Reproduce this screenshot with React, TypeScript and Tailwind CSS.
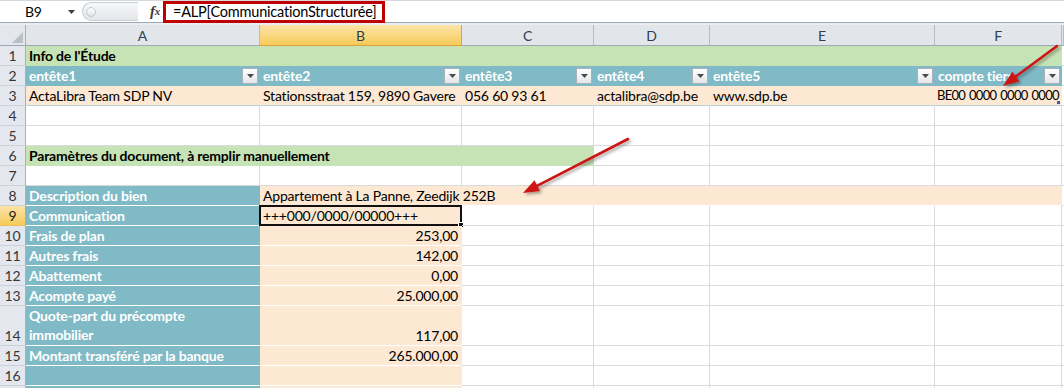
import React from 'react';

const FONT = "font-['Lato','Liberation_Sans',sans-serif]";

type CellProps = {
  w: string;
  line?: string;
  className?: string;
  children?: React.ReactNode;
};

// one spreadsheet cell; gridline on the right and bottom
const Cell = ({ w, line = 'border-[#DADADA]', className = '', children }: CellProps) => (
  <div
    className={`relative flex shrink-0 items-end whitespace-nowrap border-r border-b px-[3px] pb-px leading-[17px] ${w} ${line} ${className}`}
  >
    {children}
  </div>
);

const RowHead = ({ n, active }: { n?: number; active?: boolean }) => (
  <div
    className={`flex w-[26px] shrink-0 items-end justify-center border-r border-b pb-px leading-[17px] ${
      active
        ? 'border-r-[#E2A23A] border-b-[#E9BE62] bg-linear-to-b from-[#FCE4A6] to-[#F7CB58] text-[#1E1E1E]'
        : 'border-r-[#A7B1BD] border-b-[#CDD2D8] bg-[#E4E8EE] text-[#363636]'
    }`}
  >
    {n}
  </div>
);

const FilterBtn = () => (
  <div className="ml-auto mb-0 flex h-[16px] w-[16px] shrink-0 items-center justify-center border border-[#A9B1BA] bg-linear-to-b from-white to-[#E4E6E9]">
    <svg width="7" height="4" viewBox="0 0 7 4">
      <polygon points="0,0 7,0 3.5,4" fill="#4A4A4A" />
    </svg>
  </div>
);

const Arrow = ({ x1, y1, x2, y2 }: { x1: number; y1: number; x2: number; y2: number }) => {
  const dx = x2 - x1;
  const dy = y2 - y1;
  const len = Math.hypot(dx, dy);
  const ux = dx / len;
  const uy = dy / len;
  const hl = 16;
  const hw = 6;
  const bx = x2 - ux * hl;
  const by = y2 - uy * hl;
  const pts = `${x2},${y2} ${bx - uy * hw},${by + ux * hw} ${bx + uy * hw},${by - ux * hw}`;
  return (
    <g filter="url(#shadow)">
      <line x1={x1} y1={y1} x2={bx + ux * 3} y2={by + uy * 3} stroke="#CC1414" strokeWidth={2.6} strokeLinecap="round" />
      <polygon points={pts} fill="#CC1414" />
    </g>
  );
};

const teal = 'bg-[#80BAC6] font-bold text-white';
const peach = 'bg-[#FCE8D3]';
const green = 'bg-[#C6E3B5] font-bold text-black';

const labels: { n?: number; label: React.ReactNode; value: string; tall?: boolean }[] = [
  { n: 10, label: 'Frais de plan', value: '253,00' },
  { n: 11, label: 'Autres frais', value: '142,00' },
  { n: 12, label: 'Abattement', value: '0,00' },
  { n: 13, label: 'Acompte payé', value: '25.000,00' },
  {
    n: 14,
    label: (
      <span className="whitespace-normal leading-[19px]">
        Quote-part du précompte
        <br />
        immobilier
      </span>
    ),
    value: '117,00',
    tall: true,
  },
  { n: 15, label: 'Montant transféré par la banque', value: '265.000,00' },
  { n: 16, label: '', value: '' },
  // row 17 only peeks in at the bottom edge
  { label: '', value: '' },
];

const WhiteRest = () => (
  <>
    <Cell w="w-[132px]" />
    <Cell w="w-[116px]" />
    <Cell w="w-[225px]" />
    <Cell w="w-[127px]" />
    <Cell w="flex-1" />
  </>
);

const EmptyRow = ({ n }: { n: number }) => (
  <div className="flex h-5">
    <RowHead n={n} />
    <Cell w="w-[234px]" />
    <Cell w="w-[202px]" />
    <WhiteRest />
  </div>
);

export default function App() {
  const heads = ['entête1', 'entête2', 'entête3', 'entête4', 'entête5', 'compte tiers'];
  const headW = ['w-[234px]', 'w-[202px]', 'w-[132px]', 'w-[116px]', 'w-[225px]', 'w-[127px]'];
  const row3 = ['ActaLibra Team SDP NV', 'Stationsstraat 159, 9890 Gavere', '056 60 93 61', 'actalibra@sdp.be', 'www.sdp.be', 'BE00 0000 0000 0000'];

  return (
    <div className={`relative h-[388px] w-[1064px] overflow-hidden bg-white text-[14px] tracking-[-0.2px] text-black ${FONT}`}>
      {/* formula bar */}
      <div className="flex h-[23px] border-t border-b border-t-[#D5D9DE] border-b-[#9EA6B0] bg-white">
        <div className="relative flex w-[82px] items-center">
          <span className="pl-[25px]">B9</span>
          <svg className="absolute left-[68px] top-[9px]" width="7" height="4" viewBox="0 0 7 4">
            <polygon points="0,0 7,0 3.5,4" fill="#3C3C3C" />
          </svg>
        </div>
        <div className="my-[1px] flex w-[56px] items-center rounded-l-full border border-r-0 border-[#C8CDD3] bg-linear-to-b from-[#F7F8F9] to-[#E3E6EA] pl-[3px]">
          <div className="h-[10px] w-[10px] rounded-full border border-[#C4C9CF] bg-linear-to-b from-white to-[#E0E3E7]" />
        </div>
        <div className="flex w-[25px] items-center justify-end pr-[3px] font-['Liberation_Serif',serif] text-[15px] font-bold italic text-[#3A3A3A]">
          f<span className="text-[11px]">x</span>
        </div>
        <div className="flex h-[22px] w-[222px] items-center border-[3px] border-[#C00000] pl-[7px] text-[14.5px]">
          =ALP[CommunicationStructurée]
        </div>
        <div className="flex-1" />
      </div>
      <div className="h-[2px] bg-[#E9ECF0]" />

      {/* column headers */}
      <div className="flex h-[21px] text-[#2F3E55]">
        <div className="relative w-[26px] shrink-0 border-r border-b border-r-[#A7B1BD] border-b-[#9EA8B4] bg-[#E4E8EE]">
          <svg className="absolute right-[2px] bottom-[2px]" width="11" height="11" viewBox="0 0 11 11">
            <polygon points="11,0 11,11 0,11" fill="#B9C0C8" />
          </svg>
        </div>
        {['A', 'B', 'C', 'D', 'E', 'F', ''].map((c, i) => (
          <div
            key={i}
            className={`flex shrink-0 items-center justify-center border-r border-b ${
              [...headW, 'flex-1'][i]
            } ${
              c === 'B'
                ? 'border-r-[#E2A23A] border-b-[#E2A23A] bg-linear-to-b from-[#FCE4A6] to-[#F7CB58]'
                : 'border-r-[#B3BBC5] border-b-[#9EA8B4] bg-[#E2E6EB]'
            }`}
          >
            {c}
          </div>
        ))}
      </div>

      {/* row 1 */}
      <div className="flex h-5">
        <RowHead n={1} />
        <Cell w="w-[1036px]" line="border-transparent" className={green}>
          Info de l'Étude
        </Cell>
        <Cell w="flex-1" />
      </div>

      {/* row 2: table headers with filter buttons */}
      <div className="flex h-5">
        <RowHead n={2} />
        {heads.map((h, i) => (
          <Cell key={h} w={headW[i]} line="border-transparent" className={`${teal} pr-[1px]`}>
            <span>{h}</span>
            <FilterBtn />
          </Cell>
        ))}
        <Cell w="flex-1" />
      </div>

      {/* row 3 */}
      <div className="flex h-5">
        <RowHead n={3} />
        {row3.map((t, i) => (
          <Cell key={t} w={headW[i]} line="border-transparent border-b-[#B5D2DB]" className={`${peach} ${i === 5 ? 'pl-[2px]' : ''}`}>
            <span className={i === 5 ? 'text-[13px] tracking-[-0.75px] [word-spacing:1.5px]' : ''}>{t}</span>
            {i === 5 && <div className="absolute right-[1px] bottom-[1px] h-[3px] w-[3px] bg-[#3F5FA0]" />}
          </Cell>
        ))}
        <Cell w="flex-1" />
      </div>

      <EmptyRow n={4} />
      <EmptyRow n={5} />

      {/* row 6 */}
      <div className="flex h-5">
        <RowHead n={6} />
        <Cell w="w-[568px]" line="border-transparent" className={green}>
          Paramètres du document, à remplir manuellement
        </Cell>
        <Cell w="w-[116px]" />
        <Cell w="w-[225px]" />
        <Cell w="w-[127px]" />
        <Cell w="flex-1" />
      </div>

      <EmptyRow n={7} />

      {/* row 8 */}
      <div className="flex h-5">
        <RowHead n={8} />
        <Cell w="w-[234px]" line="border-transparent border-b-white" className={teal}>
          Description du bien
        </Cell>
        <Cell w="w-[802px]" line="border-transparent border-b-white" className={peach}>
          Appartement à La Panne, Zeedijk 252B
        </Cell>
        <Cell w="flex-1" />
      </div>

      {/* row 9 (selected) */}
      <div className="flex h-5">
        <RowHead n={9} active />
        <Cell w="w-[234px]" line="border-transparent border-b-white" className={teal}>
          Communication
        </Cell>
        <Cell w="w-[202px]" line="border-transparent border-b-white" className={peach}>
          +++000/0000/00000+++
          <div className="absolute -top-[1px] -left-[1px] -right-[1px] -bottom-[1px] border-2 border-[#111]" />
          <div className="absolute -right-[3px] -bottom-[3px] h-[6px] w-[6px] border border-white bg-[#111]" />
        </Cell>
        <WhiteRest />
      </div>

      {labels.map((r, i) => (
        <div key={i} className={`flex ${r.tall ? 'h-10' : 'h-5'}`}>
          <RowHead n={r.n} />
          <Cell w="w-[234px]" line="border-transparent border-b-white" className={teal}>
            {r.label}
          </Cell>
          <Cell w="w-[202px]" line="border-transparent border-b-white" className={`${peach} justify-end`}>
            {r.value}
          </Cell>
          <WhiteRest />
        </div>
      ))}

      {/* callout arrows */}
      <svg className="pointer-events-none absolute inset-0" width="1064" height="388">
        <defs>
          <filter id="shadow" x="-20%" y="-20%" width="140%" height="140%">
            <feDropShadow dx="2" dy="2" stdDeviation="1.5" floodColor="#000" floodOpacity="0.35" />
          </filter>
        </defs>
        <Arrow x1={1057} y1={46} x2={1003} y2={86} />
        <Arrow x1={628} y1={139} x2={523} y2={193} />
      </svg>
    </div>
  );
}
